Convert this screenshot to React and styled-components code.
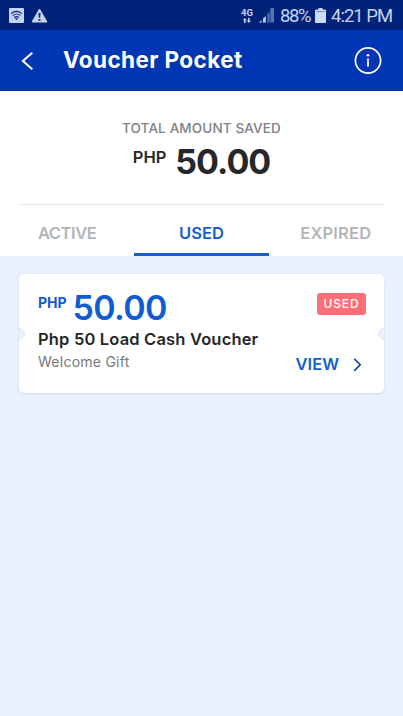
import React, { useState } from "react";
import styled, { createGlobalStyle } from "styled-components";

const TABS = [
  { name: "Active", spacing: "-0.4px" },
  { name: "Used", spacing: "0.1px" },
  { name: "Expired", spacing: "0.2px" },
];

const VOUCHERS = [
  {
    id: 1,
    amount: "50.00",
    title: "Php 50 Load Cash Voucher",
    source: "Welcome Gift",
    status: "Used",
  },
];

function StatusBar() {
  return (
    <Status>
      <StatusGroup>
        <svg width="15" height="15" viewBox="0 0 15 15">
          <rect width="15" height="15" rx="1" fill="#c5d3f0" />
          <g fill="none" stroke="#0b2c80" strokeWidth="1.2">
            <path d="M2 5.6Q7.5 1.2 13 5.6" />
            <path d="M3.6 7.6Q7.5 4.4 11.4 7.6" />
            <path d="M5.2 9.5Q7.5 7.6 9.8 9.5" />
          </g>
          <path d="M5.8 10.3h3.4l-1.7 1.9z" fill="#0b2c80" />
        </svg>
        <svg width="17" height="15" viewBox="0 0 17 15">
          <path
            d="M8.5 1L16 14H1z"
            fill="#c5d3f0"
            stroke="#c5d3f0"
            strokeLinejoin="round"
          />
          <path d="M7.4 5h2.2l-.4 4.8H7.8zM7.5 11h2v1.8h-2z" fill="#0b2c80" />
        </svg>
      </StatusGroup>
      <StatusGroup>
        <Network>
          <span>4G</span>
          <svg width="10" height="5" viewBox="0 0 10 5">
            <path
              d="M2.8 0L5 2.3H3.6V5H2V2.3H.8zM6 0h1.6v2.5H9L6.8 5 4.8 2.5H6z"
              fill="#c5d3f0"
            />
          </svg>
        </Network>
        <Signal width="15" height="15" viewBox="0 0 15 15">
          <path d="M0 14.5L2.6 12v2.5zM4 10.6L6.8 8v6.5H4z" fill="#c5d3f0" />
          <path d="M8.4 6L10.6 4v10.5H8.4zM11.4 0H15v14.5h-3.6z" fill="#5873b1" />
        </Signal>
        <Percent>88%</Percent>
        <Battery width="11" height="15" viewBox="0 0 11 15">
          <path
            d="M3.5 0h4v1.6H10a1 1 0 011 1V14a1 1 0 01-1 1H1a1 1 0 01-1-1V2.6a1 1 0 011-1h2.5z"
            fill="#d0dcf4"
          />
          <path d="M1.3 3h8.4v1.1H1.3z" fill="#7d93c7" />
        </Battery>
        <Clock>4:21 PM</Clock>
      </StatusGroup>
    </Status>
  );
}

function Voucher({ amount, title, source, status }) {
  return (
    <Card>
      <Notch $side="left" />
      <Notch $side="right" />
      <CardTop>
        <Price>
          <Currency $small>PHP</Currency>
          <Amount>{amount}</Amount>
        </Price>
        <Badge>{status}</Badge>
      </CardTop>
      <CardTitle>{title}</CardTitle>
      <CardBottom>
        <Source>{source}</Source>
        <ViewButton>
          View
          <svg width="9" height="15" viewBox="0 0 9 15">
            <path
              d="M1.2 1.7L7.2 7.8 1.2 13.9"
              fill="none"
              stroke="#0a3f9f"
              strokeWidth="1.6"
            />
          </svg>
        </ViewButton>
      </CardBottom>
    </Card>
  );
}

export default function App() {
  const [tab, setTab] = useState("Used");

  return (
    <Screen>
      <GlobalStyle />
      <StatusBar />
      <Header>
        <IconButton aria-label="Back">
          <svg width="13" height="20" viewBox="0 0 13 20">
            <path
              d="M12.3 1.7L2.9 10l9.4 8.3"
              fill="none"
              stroke="#fff"
              strokeWidth="2.1"
            />
          </svg>
        </IconButton>
        <Title>Voucher Pocket</Title>
        <IconButton aria-label="Info">
          <svg width="28" height="28" viewBox="0 0 28 28">
            <circle
              cx="14"
              cy="13.5"
              r="12.6"
              fill="none"
              stroke="#fff"
              strokeWidth="1.7"
            />
            <circle cx="14" cy="8.2" r="1.3" fill="#fff" />
            <path d="M14 11.5v8.3" stroke="#fff" strokeWidth="1.7" />
          </svg>
        </IconButton>
      </Header>
      <Summary>
        <Caption>Total amount saved</Caption>
        <Price $center>
          <Currency>PHP</Currency>
          <Amount $dark>50.00</Amount>
        </Price>
      </Summary>
      <Tabs>
        {TABS.map(({ name, spacing }) => (
          <Tab
            key={name}
            $active={tab === name}
            $spacing={spacing}
            onClick={() => setTab(name)}
          >
            {name}
          </Tab>
        ))}
      </Tabs>
      <List>
        {VOUCHERS.filter((v) => v.status === tab).map((v) => (
          <Voucher {...v} key={v.id} />
        ))}
      </List>
    </Screen>
  );
}

const GlobalStyle = createGlobalStyle`
  * {
    box-sizing: border-box;
  }

  body {
    margin: 0;
    font-family: Inter, "Liberation Sans", sans-serif;
    background: #ebf1fc;
  }

  button {
    margin: 0;
    padding: 0;
    border: 0;
    background: none;
    font: inherit;
  }

  svg {
    display: block;
    flex: none;
  }
`;

const Screen = styled.div`
  display: flex;
  flex-direction: column;
  height: 716px;
  overflow: hidden;
  background: #ebf1fc;
`;

const Status = styled.div`
  display: flex;
  justify-content: space-between;
  height: 30px;
  padding: 1px 11px 0 9px;
  background: #002379;
  color: #c5d3f0;
  font-family: Roboto, sans-serif;
`;

const StatusGroup = styled.div`
  display: flex;
  align-items: center;
  gap: 7px;
`;

const Network = styled.div`
  display: flex;
  flex-direction: column;
  align-items: center;
  gap: 1px;
  margin-right: -1px;
  font-size: 9.5px;
  font-weight: 700;
  line-height: 9px;
`;

const Signal = styled.svg`
  margin-right: -1px;
`;

const Percent = styled.span`
  width: 30px;
  font-size: 18.5px;
  letter-spacing: -1.4px;
`;

const Battery = styled.svg`
  margin: 0 -2px;
`;

const Clock = styled.span`
  width: 61px;
  font-size: 18.5px;
  letter-spacing: -1px;
  white-space: nowrap;
`;

const Header = styled.header`
  display: flex;
  align-items: center;
  height: 61px;
  padding: 0 21px 0 20px;
  background: #0035b3;
`;

const IconButton = styled.button`
  display: flex;
`;

const Title = styled.h1`
  flex: 1;
  margin: -2px 0 0 30px;
  color: #fff;
  font-size: 22.5px;
  font-weight: 700;
  letter-spacing: 0.4px;
  line-height: 30px;
  white-space: nowrap;
`;

const Summary = styled.section`
  height: 114px;
  padding-top: 28px;
  background: #fff;

  &::after {
    content: "";
    display: block;
    height: 1px;
    margin: 23px 19px 0;
    background: #dfe2e7;
  }
`;

const Caption = styled.div`
  color: #7e8187;
  font-size: 13.5px;
  font-weight: 500;
  letter-spacing: 0.15px;
  line-height: 19px;
  text-align: center;
  text-transform: uppercase;
`;

const Price = styled.div`
  display: flex;
  align-items: flex-start;
  justify-content: ${(p) => (p.$center ? "center" : "flex-start")};
  gap: ${(p) => (p.$center ? "9px" : "6px")};
  height: 43px;
`;

const Currency = styled.span`
  margin-top: ${(p) => (p.$small ? "7px" : "9px")};
  color: ${(p) => (p.$small ? "#115bd3" : "#25272b")};
  font-size: ${(p) => (p.$small ? "14px" : "16.5px")};
  font-weight: ${(p) => (p.$small ? 700 : 600)};
  line-height: 20px;
`;

const Amount = styled.span`
  color: ${(p) => (p.$dark ? "#25272b" : "#115bd3")};
  font-size: 34px;
  font-weight: ${(p) => (p.$dark ? 700 : 600)};
  letter-spacing: ${(p) => (p.$dark ? "-1px" : "-0.7px")};
  line-height: ${(p) => (p.$dark ? "48px" : "44px")};
`;

const Tabs = styled.nav`
  display: grid;
  grid-template-columns: repeat(3, 1fr);
  height: 51px;
  background: #fff;
`;

const Tab = styled.button`
  padding-top: 8px;
  border-bottom: 3px solid ${(p) => (p.$active ? "#1560ca" : "transparent")};
  color: ${(p) => (p.$active ? "#1560ca" : "#b3b5b9")};
  font-size: 16.5px;
  font-weight: 600;
  letter-spacing: ${(p) => p.$spacing};
  text-transform: uppercase;
`;

const List = styled.main`
  padding: 18px 19px;
`;

const Card = styled.article`
  position: relative;
  height: 119px;
  padding: 12px 18px 0 19px;
  overflow: hidden;
  border-radius: 5px;
  background: #fff;
  box-shadow: 0 1px 3px rgba(80, 110, 180, 0.18);
`;

const Notch = styled.span`
  position: absolute;
  top: 54px;
  ${(p) => p.$side}: -6px;
  width: 12px;
  height: 12px;
  border: 1px solid #e2e7f2;
  border-radius: 50%;
  background: #ebf1fc;
`;

const CardTop = styled.div`
  display: flex;
  justify-content: space-between;
  height: 41px;
`;

const Badge = styled.span`
  width: 49px;
  height: 22px;
  margin-top: 7px;
  border-radius: 3px;
  background: #fc6f77;
  color: #fff;
  font-size: 12px;
  font-weight: 500;
  letter-spacing: 0.9px;
  line-height: 22px;
  text-align: center;
  text-transform: uppercase;
`;

const CardTitle = styled.h2`
  margin: 0;
  color: #25272b;
  font-size: 16.5px;
  font-weight: 600;
  letter-spacing: 0.17px;
  line-height: 24px;
`;

const CardBottom = styled.div`
  display: flex;
  justify-content: space-between;
`;

const Source = styled.span`
  color: #75787e;
  font-size: 14px;
  letter-spacing: 0.25px;
  line-height: 21px;
`;

const ViewButton = styled.button`
  display: flex;
  align-items: center;
  gap: 14px;
  height: 26px;
  padding-right: 4px;
  color: #1560ca;
  font-size: 16.5px;
  font-weight: 600;
  text-transform: uppercase;
`;
